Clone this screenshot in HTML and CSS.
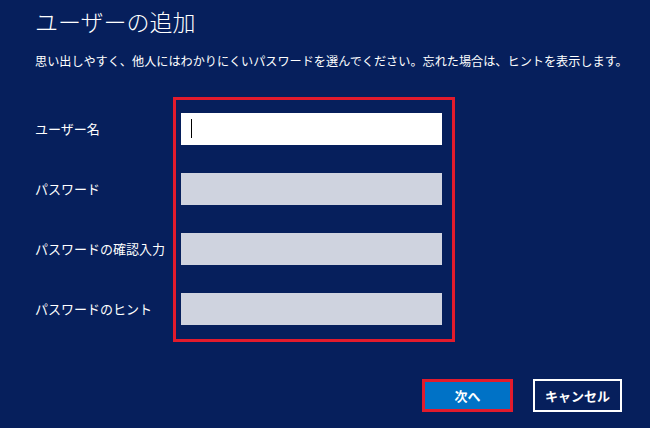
FILE: index.html
```html
<!DOCTYPE html>
<html lang="ja">
<head>
  <meta charset="UTF-8" />
  <title>ユーザーの追加</title>
  <link rel="stylesheet" href="styles.css">
</head>
<body>
  <h1 class="title">ユーザーの追加</h1>
  <p class="lead">思い出しやすく、他人にはわかりにくいパスワードを選んでください。忘れた場合は、ヒントを表示します。</p>

  <div class="form-row">
    <div class="labels">
      <label>ユーザー名</label>
      <label>パスワード</label>
      <label>パスワードの確認入力</label>
      <label>パスワードのヒント</label>
    </div>
    <div class="fields">
      <div class="field active"><span class="caret"></span></div>
      <div class="field"></div>
      <div class="field"></div>
      <div class="field"></div>
    </div>
  </div>

  <div class="actions">
    <button class="btn primary">次へ</button>
    <button class="btn outline">キャンセル</button>
  </div>
</body>
</html>
```
FILE: styles.css
```css
body {
  margin: 0;
  width: 650px;
  height: 428px;
  background: #061f5c;
  color: #fff;
  font-family: "Noto Sans CJK JP", "Noto Sans", sans-serif;
  overflow: hidden;
}

.title {
  margin: 0;
  padding: 6px 0 0 35px;
  font-size: 23px;
  font-weight: 300;
  line-height: 30px;
}

.lead {
  margin: 17px 0 0 35px;
  font-size: 12.15px;
  line-height: 16px;
}

.form-row {
  display: flex;
  margin: 28px 0 0 0;
}

.labels {
  width: 138px;
  padding: 16px 0 0 35px;
  display: flex;
  flex-direction: column;
  gap: 28px;
}

.labels label {
  height: 32px;
  line-height: 32px;
  font-size: 13px;
}

.fields {
  width: 271px;
  border: 3px solid #e21b2c;
  padding: 13px 0 14px 5px;
  display: flex;
  flex-direction: column;
  gap: 28px;
}

.field {
  width: 261px;
  height: 32px;
  background: #cfd3df;
  position: relative;
}

.field.active {
  background: #fff;
}

.caret {
  position: absolute;
  left: 10px;
  top: 6px;
  width: 1px;
  height: 19px;
  background: #000;
}

.actions {
  display: flex;
  justify-content: flex-end;
  gap: 20px;
  margin: 37px 28px 0 0;
}

.btn {
  height: 33px;
  font-family: "Noto Sans CJK JP", sans-serif;
  font-size: 13px;
  font-weight: 700;
  color: #fff;
  cursor: pointer;
  padding: 0;
}

.primary {
  width: 91px;
  background: #0072c6;
  border: 3px solid #e21b2c;
}

.outline {
  width: 89px;
  background: transparent;
  border: 2px solid #fff;
}
```
